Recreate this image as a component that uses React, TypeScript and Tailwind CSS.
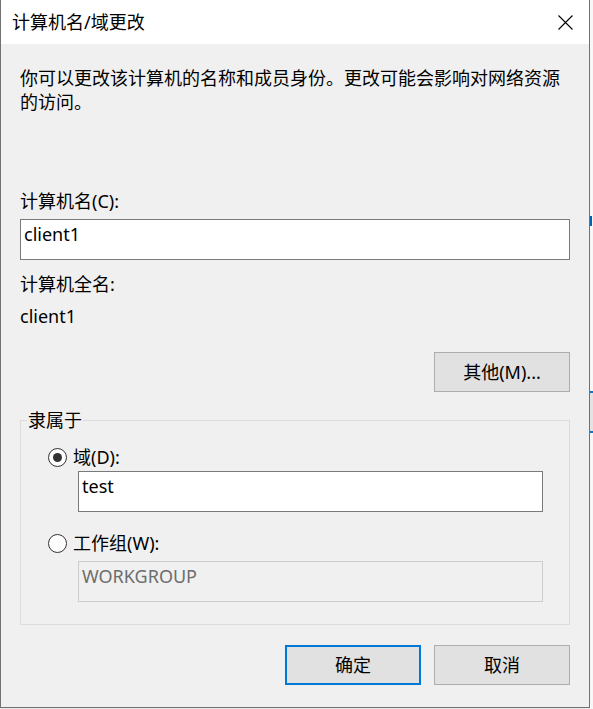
// ── Helpers ───────────────────────────────────────────────────

function CloseGlyph() {
  return (
    <svg width="15" height="15" viewBox="0 0 15 15" className="shrink-0">
      <path d="M0.5 0.5 L14.5 14.5 M14.5 0.5 L0.5 14.5" stroke="#000" strokeWidth="1.1" fill="none" />
    </svg>
  )
}

function Radio({ checked, label }: { checked?: boolean; label: string }) {
  return (
    <div className="flex items-center h-[24px] pl-[27px]">
      <span className="w-[19px] h-[19px] rounded-full border border-[#333333] bg-white flex items-center justify-center shrink-0">
        {checked && <span className="w-[9px] h-[9px] rounded-full bg-[#333333]" />}
      </span>
      <span className="ml-[6px]">{label}</span>
    </div>
  )
}

function Button({ label, primary }: { label: string; primary?: boolean }) {
  return (
    <button
      className={
        primary
          ? 'w-[136px] h-[40px] bg-[#e1e1e1] border-2 border-[#0078d7] flex items-center justify-center'
          : 'w-[136px] h-[40px] bg-[#e1e1e1] border border-[#adadad] flex items-center justify-center'
      }
    >
      {label}
    </button>
  )
}

// ── Component ─────────────────────────────────────────────────

export default function App() {
  return (
    <div className="w-[593px] h-[709px] flex bg-[#e9e9e9] font-[family-name:'Noto_Sans','Noto_Sans_CJK_SC',sans-serif] text-[18px] leading-[24px] text-black overflow-hidden">
      <div className="w-[590px] h-[708px] flex flex-col border-l border-r border-b border-[#717171] shrink-0">
        {/* title bar */}
        <div className="h-[44px] bg-white flex items-center justify-between pl-[11px] pr-[16px] shrink-0">
          <span>计算机名/域更改</span>
          <CloseGlyph />
        </div>

        <div className="flex-1 bg-[#f0f0f0] px-[19px] pt-[22px] flex flex-col">
          <p className="w-[550px]">
            你可以更改该计算机的名称和成员身份。更改可能会影响对网络资源的访问。
          </p>

          <div className="mt-[75px]">计算机名(C):</div>
          <div className="mt-[6px] h-[41px] bg-white border border-[#7a7a7a] pl-[3px] pt-[2px]">client1</div>

          <div className="mt-[12px]">计算机全名:</div>
          <div className="mt-[8px]">client1</div>

          <div className="mt-[24px] flex justify-end">
            <Button label="其他(M)..." />
          </div>

          <fieldset className="mt-[16px] border border-[#dcdcdc] p-0 m-0">
            <legend className="ml-[6px] px-px">隶属于</legend>
            <div className="pt-[13px] pb-[22px]">
              <Radio checked label="域(D):" />
              <div className="mt-[2px] ml-[57px] w-[465px] h-[41px] bg-white border border-[#7a7a7a] pl-[3px] pt-[2px]">
                test
              </div>
              <div className="mt-[19px]">
                <Radio label="工作组(W):" />
              </div>
              <div className="mt-[6px] ml-[57px] w-[465px] h-[41px] bg-[#f0f0f0] border border-[#cccccc] pl-[3px] pt-[2px] text-[#6d6d6d]">
                WORKGROUP
              </div>
            </div>
          </fieldset>

          <div className="mt-[20px] flex justify-end gap-[13px]">
            <Button label="确定" primary />
            <Button label="取消" />
          </div>
        </div>
      </div>

      {/* window behind */}
      <div className="w-[3px] h-[709px] flex flex-col bg-[#f7f7f7] shrink-0">
        <div className="h-[216px]" />
        <div className="h-[10px] w-[2px] bg-[#0063b1]" />
        <div className="h-[165px]" />
        <div className="h-[42px] bg-[#e3e3e3] border-t-2 border-b-2 border-[#0078d7]" />
      </div>
    </div>
  )
}
